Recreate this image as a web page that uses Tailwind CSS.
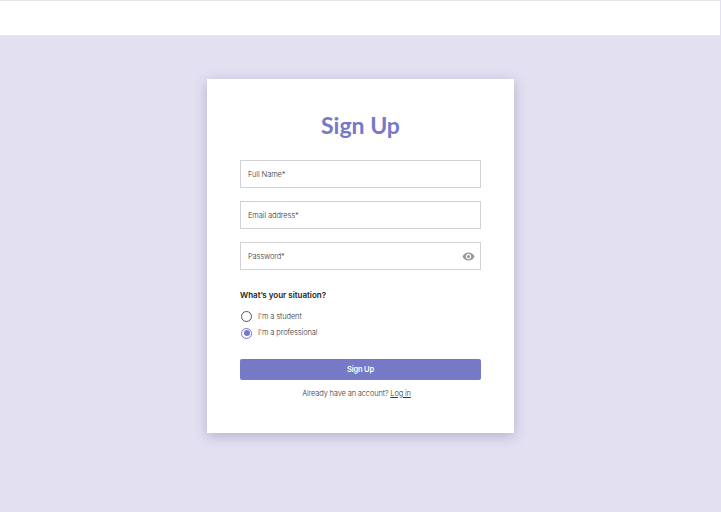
<!doctype html>
<html lang="en">
  <head>
    <meta charset="UTF-8" />
    <title>Sign Up</title>
    <script src="https://cdn.jsdelivr.net/npm/@tailwindcss/browser@4"></script>
  </head>
  <body class="bg-[#e3e0f2] font-['Inter',sans-serif] antialiased">
    <div class="flex h-[512px] w-[721px] flex-col overflow-hidden">
      <header class="h-9 w-[720px] shrink-0 border-t border-b border-[#e6e6ea] bg-white"></header>

      <main class="flex flex-1 justify-center pt-[43px]">
        <div class="h-[354px] w-[307px] bg-white px-[33px] pt-[30px] shadow-[0_3px_12px_rgba(70,65,120,0.3)]">
          <h1 class="mb-[19px] text-center font-['Lato',sans-serif] text-[23px] leading-[32px] font-bold text-[#7579c6]">Sign Up</h1>

          <form>
            <div class="mb-[13px] flex h-[28px] items-center border border-[#d2d2d6] pt-px pl-[7px] text-[7.5px] font-light tracking-[-0.12px] text-[#333]">Full Name*</div>
            <div class="mb-[13px] flex h-[28px] items-center border border-[#d2d2d6] pt-px pl-[7px] text-[7.5px] font-light tracking-[-0.12px] text-[#333]">Email address*</div>
            <div class="mb-[18px] flex h-[28px] items-center justify-between border border-[#d2d2d6] pt-px pr-[5px] pl-[7px] text-[7.5px] font-light tracking-[-0.12px] text-[#333]">
              Password*
              <svg class="size-[13px] text-[#999]" viewBox="0 0 24 24" fill="currentColor">
                <path d="M12 4.5C7 4.5 2.73 7.61 1 12c1.73 4.39 6 7.5 11 7.5s9.27-3.11 11-7.5c-1.73-4.39-6-7.5-11-7.5zM12 17c-2.76 0-5-2.24-5-5s2.24-5 5-5 5 2.24 5 5-2.24 5-5 5zm0-8c-1.66 0-3 1.34-3 3s1.34 3 3 3 3-1.34 3-3-1.34-3-3-3z" />
              </svg>
            </div>

            <p class="mb-[9px] text-[8px] leading-[14px] font-semibold text-[#222]">What’s your situation?</p>

            <div class="mb-[5.5px] flex h-[11px] items-center gap-[6px] pl-[1px] text-[7.5px] font-light tracking-[-0.12px] text-[#333]">
              <span class="size-[11px] rounded-full border border-[#555]"></span>
              I'm a student
            </div>
            <div class="mb-[20px] flex h-[11px] items-center gap-[6px] pl-[1px] text-[7.5px] font-light tracking-[-0.12px] text-[#333]">
              <span class="flex size-[11px] items-center justify-center rounded-full border border-[#7579c6]">
                <span class="size-[6px] rounded-full bg-[#7579c6]"></span>
              </span>
              I'm a professional
            </div>

            <button type="button" class="block h-[21.5px] w-full rounded-[2px] bg-[#7579c6] pt-px text-[7.5px] font-semibold tracking-[-0.2px] text-white">Sign Up</button>

            <p class="mt-[7.5px] pr-[8px] text-center text-[7.5px] leading-[12px] font-light tracking-[-0.16px] text-[#333]">
              Already have an account? <a href="#" class="underline">Log in</a>
            </p>
          </form>
        </div>
      </main>
    </div>
  </body>
</html>
